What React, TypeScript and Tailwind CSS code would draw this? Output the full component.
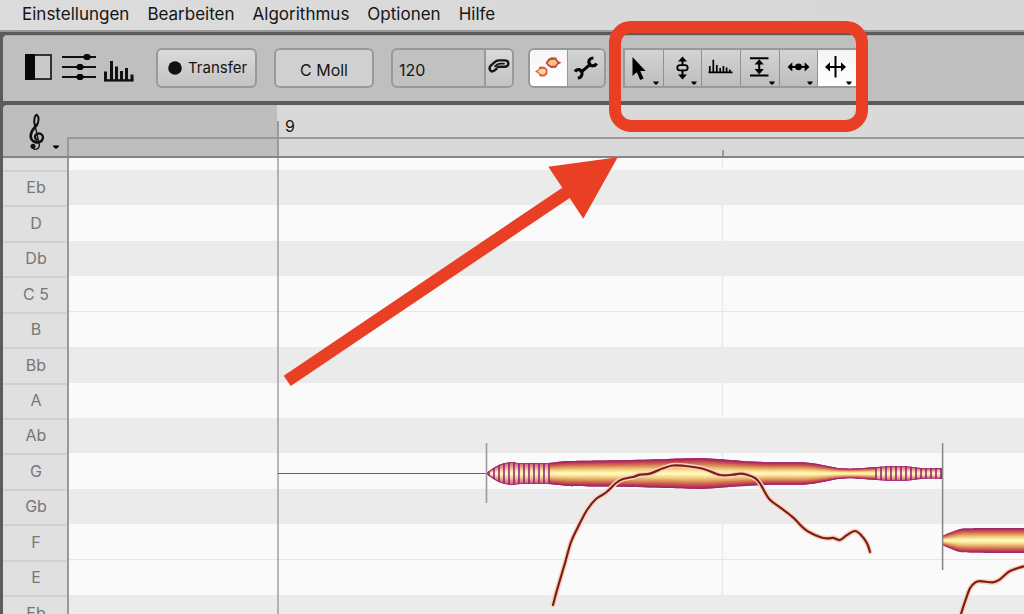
import React from "react";

type Point = [number, number];

const menus = ["Einstellungen", "Bearbeiten", "Algorithmus", "Optionen", "Hilfe"];

const rows = [
  { label: "Eb", black: true, tall: false },
  { label: "D", black: false, tall: true },
  { label: "Db", black: true, tall: false },
  { label: "C 5", black: false, tall: true, divider: true },
  { label: "B", black: false, tall: false },
  { label: "Bb", black: true, tall: true },
  { label: "A", black: false, tall: false },
  { label: "Ab", black: true, tall: false },
  { label: "G", black: false, tall: true },
  { label: "Gb", black: true, tall: false },
  { label: "F", black: false, tall: true, divider: true },
  { label: "E", black: false, tall: false },
  { label: "Eb", black: true, tall: true },
];

// Catmull-Rom spline through the points, as cubic Bezier segments.
function segments(points: Point[]) {
  let d = "";
  for (let i = 0; i < points.length - 1; i++) {
    const a = points[Math.max(i - 1, 0)];
    const b = points[i];
    const c = points[i + 1];
    const e = points[Math.min(i + 2, points.length - 1)];
    d += `C${b[0] + (c[0] - a[0]) / 6} ${b[1] + (c[1] - a[1]) / 6} ${c[0] - (e[0] - b[0]) / 6} ${c[1] - (e[1] - b[1]) / 6} ${c[0]} ${c[1]}`;
  }
  return d;
}

const curve = (points: Point[]) => `M${points[0][0]} ${points[0][1]}${segments(points)}`;

function blobPath(profile: Point[]) {
  const top = profile.map(([x, h]): Point => [x, -h]);
  const bottom = [...profile].reverse();
  return `${curve(top)}L${bottom[0][0]} ${bottom[0][1]}${segments(bottom)}Z`;
}

const stops: [number, number[]][] = [
  [0, [160, 36, 112]],
  [0.08, [178, 46, 84]],
  [0.25, [200, 86, 76]],
  [0.45, [220, 140, 92]],
  [0.65, [238, 190, 120]],
  [0.82, [248, 226, 146]],
  [1, [255, 250, 186]],
];

function shade(t: number) {
  let i = 0;
  while (i < stops.length - 2 && t > stops[i + 1][0]) i++;
  const [p, a] = stops[i];
  const [q, b] = stops[i + 1];
  const k = (t - p) / (q - p);
  return `rgb(${a.map((v, n) => Math.round(v + (b[n] - v) * k)).join(",")})`;
}

const LAYERS = 18;

function Blob({ profile, y }: { profile: Point[]; y: number }) {
  const d = blobPath(profile);
  return (
    <g transform={`translate(0 ${y})`}>
      {Array.from({ length: LAYERS }, (_, i) => (
        <path key={i} d={d} fill={shade(i / (LAYERS - 1))} transform={`scale(1 ${1 - i / LAYERS})`} />
      ))}
    </g>
  );
}

const noteG: Point[] = [
  [487, 0.5], [490, 3], [496, 7], [503, 10], [511, 11.3], [520, 10.5], [532, 10.5], [546, 10.5],
  [556, 11.3], [568, 12.4], [600, 13], [650, 14], [690, 15.2], [706, 15.2], [740, 12.8], [770, 11.2],
  [803, 11.2], [820, 9], [835, 6], [845, 5], [855, 5], [873, 6.2], [888, 7.2], [905, 7.2], [916, 6],
  [926, 5], [942, 5.4],
];
const noteF: Point[] = [
  [943, 5], [950, 8], [960, 11.6], [970, 12.2], [1000, 12.4], [1060, 12.6], [1160, 13], [1400, 13], [1900, 13], [2600, 13],
];

const pitchG: Point[] = [
  [553, 605], [557, 590], [565, 563], [571, 542], [578, 527], [587, 510], [596, 499], [606, 492.5],
  [616, 483], [623, 479], [633, 477], [640, 474.7], [650, 473.6], [663, 468.3], [673, 465.5],
  [683, 465.7], [703, 468.7], [720, 475], [733, 474.7], [740, 473.7], [747, 474.7], [755, 478],
  [760, 483.3], [769, 498.7], [780, 507.3], [793, 517.3], [805, 529.3], [820, 537], [828, 538.4],
  [833, 537.8], [840, 540], [847, 535], [855, 531], [861, 535], [867, 543.3], [870, 552],
];
const pitchF: Point[] = [
  [958, 625], [961, 614], [965, 601.7], [970, 588.3], [975, 582.7], [980, 581.2], [993, 582.3],
  [1000, 579.3], [1010, 571], [1024, 566.3],
];

const onset = Array.from({ length: 13 }, (_, i) => 489 + i * 5);
const tail = Array.from({ length: 14 }, (_, i) => 876 + i * 5);

function PitchLine({ points }: { points: Point[] }) {
  const d = curve(points);
  return (
    <g fill="none" strokeLinecap="round" strokeLinejoin="round">
      <path d={d} stroke="#f6d3bd" strokeWidth="5" />
      <path d={d} stroke="#7f1d14" strokeWidth="2.2" />
    </g>
  );
}

function NoteCanvas() {
  return (
    <svg className="absolute inset-0 h-full w-full" role="img" aria-label="Noten">
      <g transform="translate(-69 -158)">
        <path d="M722.5 158V2000" stroke="#ebebeb" strokeWidth="1.5" />
        <path d="M278 158V2000" stroke="#9b9b9b" strokeWidth="1.4" />
        <path d="M278 473.5H487" stroke="#b0443f" strokeWidth="1" />
        <path d="M486.5 443V503" stroke="#9a9a9a" strokeWidth="1.6" />
        <Blob profile={noteG} y={473.5} />
        <clipPath id="bodyG">
          <path d={blobPath(noteG)} transform="translate(0 473.5)" />
        </clipPath>
        <g clipPath="url(#bodyG)">
          {[...onset, ...tail].map((x) => (
            <React.Fragment key={x}>
              <path d={`M${x + (x < 700 ? -2.5 : 2.5)} 455V492`} stroke="#fff0d8" strokeWidth="3.2" opacity="0.35" />
              <path d={`M${x} 455V492`} stroke="#98258a" strokeWidth="1.6" />
            </React.Fragment>
          ))}
          <path d={blobPath(noteG)} transform="translate(0 473.5)" fill="none" stroke="#a3246f" strokeWidth="1.6" />
        </g>
        <Blob profile={noteF} y={540.5} />
        <path d="M942.6 443V570" stroke="#858585" strokeWidth="1.5" />
        <PitchLine points={pitchG} />
        <PitchLine points={pitchF} />
      </g>
    </svg>
  );
}

const Caret = () => (
  <svg className="absolute right-[3px] bottom-px h-1 w-2" viewBox="0 0 8 4" aria-hidden="true">
    <path d="M1 0.4H7L5 3.4H3Z" fill="#000" />
  </svg>
);

const tools = [
  {
    name: "Hauptwerkzeug",
    caret: true,
    icon: <path d="M7.5 8V27L11.8 23.2L15.2 31L18.6 29.5L15.2 21.9H20.6Z" fill="#000" />,
  },
  {
    name: "Tonhöhe",
    caret: true,
    icon: (
      <g fill="#000">
        <path d="M18.5 7.5L23 12.5H14ZM18.5 30.5L23 25.5H14Z" />
        <path d="M18.5 11V16M18.5 21.5V27" stroke="#000" strokeWidth="2" />
        <rect x="13.3" y="16.2" width="10.4" height="5.2" rx="2.6" fill="none" stroke="#000" strokeWidth="1.8" />
      </g>
    ),
  },
  {
    name: "Klang",
    caret: false,
    icon: (
      <path d="M6.5 23.4H30.5M7.8 24V17M11.3 24V10.7M14.8 24V16M18.2 24V19M21.4 24V17M24.6 24V18.5M27.8 24V20.5" fill="none" stroke="#000" strokeWidth="1.7" />
    ),
  },
  {
    name: "Lautstärke",
    caret: true,
    icon: (
      <g fill="#000">
        <path d="M9 9.2H27.5M9 26.4H27.5M18.2 14V22" stroke="#000" strokeWidth="2" />
        <path d="M18.2 10.2L22.8 15.6H13.6ZM18.2 25.4L22.8 20H13.6Z" />
      </g>
    ),
  },
  {
    name: "Zeit",
    caret: true,
    icon: (
      <g fill="#000">
        <path d="M11 17.9H26" stroke="#000" strokeWidth="2" />
        <path d="M7.5 17.9L12.3 13.2V22.6ZM29.5 17.9L24.7 13.2V22.6Z" />
        <circle cx="18.5" cy="17.9" r="3.3" />
      </g>
    ),
  },
  {
    name: "Notentrennung",
    caret: true,
    active: true,
    icon: (
      <g fill="#000">
        <path d="M17.5 7V28.5M11 17.9H24" stroke="#000" strokeWidth="2" />
        <path d="M7 17.9L12 13.2V22.6ZM28 17.9L23 13.2V22.6Z" />
      </g>
    ),
  },
];

const raised = "border-2 border-[#999] bg-linear-to-b from-[#dadada] to-[#c4c4c4]";

function Toolbar() {
  return (
    <div className="flex h-[66px] shrink-0 items-center rounded-tl border-t border-[#aaa] bg-[#bfbfbf] pb-px pl-[21px]">
      <div className="flex w-[132px] shrink-0 items-center">
        <button aria-label="Seitenleiste">
          <svg className="h-7 w-8" viewBox="0 0 32 28">
            <rect x="2" y="1" width="25" height="24" fill="#c9c9c9" stroke="#222" strokeWidth="1.8" />
            <path d="M1 0H11V26H1Z" fill="#080808" />
          </svg>
        </button>
        <button aria-label="Regler" className="ml-1.5">
          <svg className="h-7 w-9" viewBox="0 0 36 28">
            <path d="M0 3H34M0 13H34M0 23H34" stroke="#111" strokeWidth="2" />
            <path d="M23 .5H27L29 3L27 5.5H23L21 3ZM16 10.5H20L22 13L20 15.5H16L14 13ZM16 20.5H20L22 23L20 25.5H16L14 23Z" fill="#080808" stroke="#080808" />
          </svg>
        </button>
        <button aria-label="Spektrum" className="ml-1.5">
          <svg className="h-7 w-8" viewBox="0 0 32 28">
            <path d="M1.5 17.5V26.5M7.5 7V26.5M12.5 12.5V26.5M17.5 17V26.5M22.5 14V26.5M28 20.5V26.5" stroke="#111" strokeWidth="3" />
            <path d="M0 26.4H29.5" stroke="#111" strokeWidth="2.4" />
          </svg>
        </button>
      </div>
      <button className={`flex h-10 w-[101px] shrink-0 items-center gap-1.5 rounded-md pl-2.5 text-[15px] ${raised}`}>
        <svg className="h-3.5 w-3.5" viewBox="0 0 14 14" aria-hidden="true">
          <circle cx="7" cy="7" r="6.8" fill="#111" />
        </svg>
        <span>Transfer</span>
      </button>
      <button className="ml-[17px] h-10 w-[100px] shrink-0 rounded-md border-2 border-[#999] bg-[#d0d0d0] pt-1">C Moll</button>
      <div className="ml-[17px] flex h-10 w-[123px] shrink-0 overflow-hidden rounded-md border-2 border-[#999] bg-[#c1c1c1]">
        <input aria-label="Tempo" defaultValue="120" className="min-w-0 flex-1 bg-transparent pt-1 pl-1.5 outline-none" />
        <button aria-label="Tempo verknüpfen" className="flex w-7 items-center justify-center border-l-2 border-[#999] bg-linear-to-b from-[#dadada] to-[#c2c2c2]">
          <svg className="mb-1 h-4 w-6" viewBox="0 0 24 16">
            <g fill="none" stroke="#161616" strokeWidth="2.4" strokeLinecap="round" strokeLinejoin="round">
              <path d="M10.5 8.8H17.6C22.6 8.8 22.6 2.4 17.6 2.4H12C10 2.4 8.6 3.2 7.4 4.3L3.8 7.6C.8 11.3 4 14.8 7.4 12.6L9.6 10.8" />
              <path d="M17 5.6H13.4C11 5.6 9.6 6.4 8 8.4" strokeWidth="1.8" />
            </g>
          </svg>
        </button>
      </div>
      <div className="ml-3.5 flex h-10 w-[78px] shrink-0 overflow-hidden rounded-md border-2 border-[#999]">
        <button aria-label="Noten bearbeiten" className="flex flex-1 items-center justify-center bg-linear-to-b from-[#f6f6f6] to-white">
          <svg className="h-6 w-7" viewBox="0 0 28 24">
            <path d="M11.5 7L14.5 2.8L17.5 1.2L22 1.6L24 5L27.5 6.8L24 8.6L22 11.8L17 12L14 10Z" fill="#c9413f" />
            <path d="M13.5 7L16.5 4L21 3.8L23.4 6.8L21 9.8L16.5 9.8Z" fill="#f4c57c" />
            <path d="M1 15.5L4.5 13.4L5.5 10.6L10.5 10.8L13.4 13.2V18L10.5 20.6L6 20.4L4.5 17.6Z" fill="#d65b45" />
            <path d="M3.5 15.5L7 12.8L11 13L12 15.8L10.4 18.6L6.8 18.2Z" fill="#f9dc90" />
          </svg>
        </button>
        <button aria-label="Einstellungen" className="flex flex-1 items-center justify-center border-l border-[#999] bg-linear-to-b from-[#d4d4d4] to-[#bdbdbd]">
          <svg className="h-6 w-7" viewBox="0 0 28 24">
            <path d="M8.6 16.6L19 7.6" stroke="#050505" strokeWidth="3" />
            <path d="M21.4 2C17.6 2 15.9 5 17.4 7.8C18.9 10.6 23 10.4 24.6 7.4M3 15.6C4.6 12.9 8.6 13.1 9.8 16C10.9 19 9 21.8 5.8 22" fill="none" stroke="#050505" strokeWidth="3.2" />
          </svg>
        </button>
      </div>
      <div className="ml-[17px] flex h-10 w-[234px] shrink-0 border-y-2 border-l-2 border-[#999]" role="toolbar" aria-label="Werkzeuge">
        {tools.map((tool) => (
          <button
            key={tool.name}
            aria-label={tool.name}
            className={`relative flex flex-1 items-center border-r border-[#919191] ${tool.active ? "bg-linear-to-b from-[#f4f4f4] to-white" : "bg-linear-to-b from-[#d4d4d4] to-[#bdbdbd]"}`}
          >
            <svg className="h-9 w-[37px]" viewBox="0 1 37 36" aria-hidden="true">{tool.icon}</svg>
            {tool.caret && <Caret />}
          </button>
        ))}
      </div>
    </div>
  );
}

function Ruler() {
  return (
    <div className="flex h-[53px] shrink-0 rounded-tl border-b-2 border-[#858585] bg-[#bebebe]">
      <button aria-label="Notensystem" className="relative flex w-16 shrink-0 items-start pt-2 pl-[26px]">
        <svg className="h-[38px] w-4" viewBox="86 340 48 114">
          <g fill="none" stroke="#111" strokeLinecap="round">
            <path d="M104 379C98 359 105 343 110 346C117 353 116 367 109 377" strokeWidth="6" />
            <path d="M110 375C104 385 92 390 91 409C91 428 114 432 123 424" strokeWidth="8" />
            <path d="M123 424C134 412 124 399 113 402C103 404 101 415 109 420" strokeWidth="7" />
            <path d="M104 377L117 434C118 449 105 452 98 446" strokeWidth="4" />
          </g>
          <circle cx="98" cy="440" r="7.5" fill="#111" />
        </svg>
        <svg className="absolute right-[7px] bottom-[7px] h-1 w-2" viewBox="0 0 8 4" aria-hidden="true">
          <path d="M.5 .4H7.5L5 3.4H3Z" fill="#000" />
        </svg>
      </button>
      <div className="flex w-[210px] shrink-0 flex-col justify-end">
        <div className="h-[19px] border-t-2 border-l-2 border-[#999]" />
      </div>
      <div className="flex flex-1 flex-col bg-[#d9d9d9]">
        <div className="flex h-8 items-end">
          <div className="h-4 border-l-2 border-[#999]" />
          <span className="pl-1.5 leading-[22px]">9</span>
        </div>
        <div className="flex flex-1 items-end border-t-2 border-l-2 border-[#999]">
          <div className="ml-[443px] h-1.5 border-l-2 border-[#999]" />
        </div>
      </div>
    </div>
  );
}

function NoteGrid() {
  return (
    <div className="flex min-h-0 flex-1 overflow-hidden">
      <div className="w-[66px] shrink-0 border-r-2 border-[#999] bg-[#e0e0e0] text-[#777]">
        <div className="h-3" />
        {rows.map((row, i) => (
          <div key={i} className={`flex items-center justify-center border-t-2 border-[#d0d0d0] pb-[3px] pl-0.5 ${row.tall ? "h-9" : "h-[35px]"}`}>
            {row.label}
          </div>
        ))}
      </div>
      <div className="relative flex-1 overflow-hidden bg-[#fafafa]">
        <div className="h-3" />
        {rows.map((row, i) => (
          <div
            key={i}
            className={`${row.tall ? "h-9" : "h-[35px]"} ${row.black ? "bg-[#ebebeb]" : ""} ${row.divider ? "border-b border-[#e6e6e6]" : ""}`}
          />
        ))}
        <NoteCanvas />
      </div>
    </div>
  );
}

export default function App() {
  return (
    <div className="relative flex h-screen flex-col overflow-hidden bg-[#5b5b5b] font-['Inter','Liberation_Sans',sans-serif] text-base text-[#151515]">
      <nav className="flex h-8 shrink-0 items-center gap-[18px] border-b-2 border-[#999] bg-linear-to-r from-[#dcdcdc] to-[#d6d6d6] pl-[22px] text-[17px]">
        {menus.map((menu) => (
          <button key={menu}>{menu}</button>
        ))}
      </nav>
      <main className="flex min-h-0 flex-1 flex-col pt-[3px] pl-[3px]">
        <Toolbar />
        <div className="mt-1 flex min-h-0 flex-1 flex-col">
          <Ruler />
          <NoteGrid />
        </div>
      </main>
      <div className="pointer-events-none absolute top-[21px] left-[609px] h-[111px] w-[259px] rounded-[22px] border-[12px] border-[#e83f25]" />
      <svg className="pointer-events-none absolute top-[157px] left-[283px] h-[230px] w-[336px]" viewBox="283 157 336 230" aria-hidden="true">
        <path d="M283.7 375.7L562.3 187.7L548.3 166.7L617.7 157.3L583.3 218.7L569.7 198L290.7 386Z" fill="#e83f25" />
      </svg>
    </div>
  );
}
